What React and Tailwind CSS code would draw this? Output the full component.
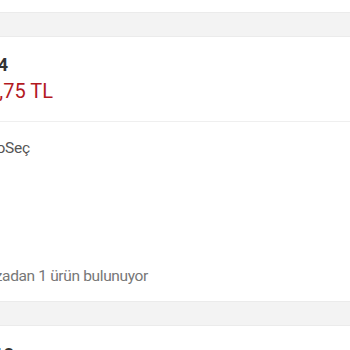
export default function App() {
    return (
        <div className="h-[350px] w-[350px] overflow-hidden bg-white" style={{ fontFamily: 'Roboto, "Noto Sans", sans-serif' }}>
            <div className="h-[12px]" />
            <div className="h-[25px] border-y border-[#ebebeb] bg-[#f3f3f3]" />

            <div className="flex h-[84px] flex-col pt-[17px]">
                <div className="-ml-[200px] w-[208px] whitespace-nowrap text-right text-[18px] font-bold leading-[22px] text-[#333]">
                    Adet 1 / 4
                </div>
                <div className="-ml-[200px] mt-[3px] w-[253px] whitespace-nowrap text-right text-[20px] leading-[24px] text-[#b3191f]">
                    1.234,75 TL
                </div>
            </div>

            <div className="h-px bg-[#efefef]" />

            <div className="flex h-[179px] flex-col pt-[16px]">
                <div className="-ml-[200px] w-[230px] whitespace-nowrap text-right text-[15.5px] leading-[20px] tracking-[-0.2px] text-[#555]">
                    KargoSeç
                </div>
                <div className="-ml-[200px] mt-auto mb-[15px] w-[348px] whitespace-nowrap text-right text-[15.5px] leading-[20px] tracking-[-0.35px] text-[#777]">
                    Mağazadan 1 ürün bulunuyor
                </div>
            </div>

            <div className="h-[25px] border-y border-[#ebebeb] bg-[#f3f3f3]" />

            <div className="pt-[18px]">
                <div className="-ml-[200px] w-[214px] whitespace-nowrap text-right text-[18px] font-bold leading-[22px] text-[#333]">
                    12
                </div>
            </div>
        </div>
    );
}
